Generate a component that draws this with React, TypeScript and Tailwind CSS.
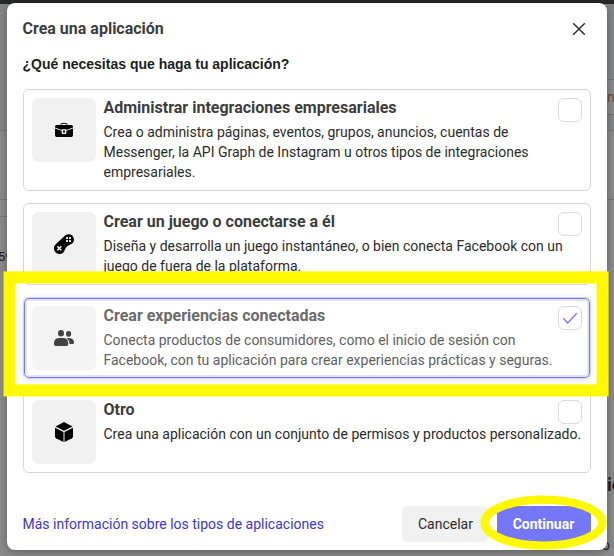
import type { ReactNode } from "react";

type CardProps = {
  title: string;
  lines: string[];
  icon: ReactNode;
  selected?: boolean;
};

function Briefcase() {
  return (
    <svg width="20" height="20" viewBox="0 0 20 20">
      <path d="M7 5.2V4.3Q7 3.4 8.2 3.4H11.8Q13 3.4 13 4.3V5.2" fill="none" stroke="#050505" />
      <path d="M2.6 4.9H17.4Q19 4.9 19 6.5V7.6L12.4 9.9V9.2H7.6V9.9L1 7.6V6.5Q1 4.9 2.6 4.9Z" fill="#050505" />
      <path d="M1 8.4L7.6 10.8V12.4Q7.6 14 9 14H11Q12.4 14 12.4 12.4V10.8L19 8.4V15.2Q19 17 17.3 17H2.7Q1 17 1 15.2Z" fill="#050505" />
      <path d="M8 10H12V14H8Z" fill="#f1f1f1" />
      <path d="M9.1 10.6H10.9V12.8H9.1Z" fill="#050505" />
    </svg>
  );
}

function Gamepad() {
  return (
    <svg width="20" height="20" viewBox="0 0 20 20">
      <path d="M11 1.5C13.5-.4 17-.2 18.8 2.2C20.8 5 20.2 8.5 17.3 10C14.6 11.3 12.2 12.2 11 15.5C10 19.7 5.6 21.2 2.4 19C-.7 16.8-.8 12.7 1.5 10.4Z" fill="#050505" />
      <path d="M12 3H14V5H12ZM15 3H17V5H15ZM12 6H14V8H12ZM15 6H17V8H15Z" fill="#ddd" />
      <path d="M3.3 12.3L7.3 16.3M7.3 12.3L3.3 16.3" stroke="#eee" strokeWidth="1.6" />
    </svg>
  );
}

function People() {
  return (
    <svg width="20" height="20" viewBox="0 0 20 20" fill="#050505">
      <ellipse cx="7" cy="5.2" rx="3" ry="3.3" />
      <ellipse cx="14.6" cy="5.8" rx="2.6" ry="2.9" />
      <path d="M0 16V15Q.3 10 5.2 10H9Q14 10 14.2 15V16Q14.2 18 12.7 18H1.5Q0 18 0 16Z" />
      <path d="M12.7 9.9H15Q20 10.2 20 14.4Q20 16 18.6 16H15.5Q15.4 12 12.7 9.9Z" />
    </svg>
  );
}

function Cube() {
  return (
    <svg width="20" height="20" viewBox="0 0 20 20" fill="#050505">
      <path d="M10 0L18.5 4.6L10 8.7L1.5 4.6Z" />
      <path d="M1 5.8L9.5 10V20L2 16.2Q1 15.6 1 14.5Z" />
      <path d="M19 5.8L10.5 10V20L18 16.2Q19 15.6 19 14.5Z" />
    </svg>
  );
}

function Card({ title, lines, icon, selected }: CardProps) {
  return (
    <div
      className={
        selected
          ? "flex gap-[7.5px] rounded-md border border-[#d3d5ea] p-2 shadow-[inset_0_0_0_1px_#7478f4,inset_0_0_0_3px_#e3e4fb,0_1px_6px_#0000001c]"
          : "flex gap-[7.5px] rounded-md border border-[#d6d6d6] p-2"
      }
    >
      <div
        className={
          selected
            ? "flex size-16 shrink-0 items-center justify-center rounded-md bg-[#f1f1f1] opacity-75"
            : "flex size-16 shrink-0 items-center justify-center rounded-md bg-[#f1f1f1]"
        }
      >
        {icon}
      </div>
      <div className="min-w-0 flex-1">
        <div className="flex h-6 justify-between">
          <h2
            className={
              selected
                ? "text-base leading-[19px] font-bold text-[#6b6b6b]"
                : "text-base leading-[19px] font-bold text-[#3d3d3d]"
            }
          >
            {title}
          </h2>
          <span className="flex size-6 items-center justify-center rounded-md border border-[#d9d9d9] bg-white">
            {selected && (
              <svg width="16" height="16" viewBox="0 0 16 16">
                <path d="M1.3 8.2L5.7 12.9L14.7 3.3" fill="none" stroke="#7478f4" strokeWidth="1.4" />
              </svg>
            )}
          </span>
        </div>
        <p
          className={
            selected
              ? "text-sm leading-5 whitespace-nowrap text-[#616161]"
              : "text-sm leading-5 whitespace-nowrap text-[#2b2b2b]"
          }
        >
          {lines.map((line) => (
            <span key={line} className="block">
              {line}
            </span>
          ))}
        </p>
      </div>
    </div>
  );
}

export default function App() {
  return (
    <div className="relative h-[556px] w-[614px] overflow-hidden bg-[#8b8b8b] px-[7px] pt-[3px] font-[Roboto,sans-serif]">
      <div className="absolute inset-x-0 top-0 h-1 bg-[#282828]" />
      <div className="absolute inset-x-0 top-1 h-[126px] bg-[#848586]" />
      <div className="absolute inset-x-0 top-[130px] h-px bg-[#777]" />
      <div className="absolute inset-x-0 top-[199px] h-px bg-[#777]" />
      <div className="absolute top-[216px] left-0 h-px w-2 bg-[#777]" />
      <span className="absolute top-[248px] -left-[2px] text-[13px] leading-[18px] text-[#222]">59</span>
      <div className="absolute top-[79px] right-0 h-9 w-2 border-y border-[#727272] bg-[#8c8c8c]" />
      <span className="absolute top-[87px] left-[607px] text-sm text-[#634c3c]">n</span>
      <span className="absolute top-[471px] left-[607px] text-lg font-bold text-[#1f2023]">ic</span>
      <span className="absolute top-[535px] left-[602px] text-sm text-[#292929]">o c</span>

      <main className="relative flex h-[547px] flex-col rounded-lg bg-white px-4 shadow-[0_2px_10px_#00000050]">
        <header className="flex h-[51px] items-center justify-between">
          <h1 className="-ml-[0.5px] text-base font-bold text-[#3d3d3d]">Crea una aplicación</h1>
          <svg className="mr-[5px]" width="14" height="14" viewBox="0 0 14 14">
            <path d="M1.2 1.2L12.8 12.8M12.8 1.2L1.2 12.8" stroke="#303030" strokeWidth="1.5" />
          </svg>
        </header>
        <p className="mb-[14px] -ml-[0.5px] h-[21px] font-['Liberation_Sans',sans-serif] text-sm leading-[21px] font-bold text-[#1c1e21]">
          ¿Qué necesitas que haga tu aplicación?
        </p>
        <div className="flex flex-col gap-3">
          <Card
            title="Administrar integraciones empresariales"
            icon={<Briefcase />}
            lines={[
              "Crea o administra páginas, eventos, grupos, anuncios, cuentas de",
              "Messenger, la API Graph de Instagram u otros tipos de integraciones",
              "empresariales.",
            ]}
          />
          <Card
            title="Crear un juego o conectarse a él"
            icon={<Gamepad />}
            lines={[
              "Diseña y desarrolla un juego instantáneo, o bien conecta Facebook con un",
              "juego de fuera de la plataforma.",
            ]}
          />
          <Card
            selected
            title="Crear experiencias conectadas"
            icon={<People />}
            lines={[
              "Conecta productos de consumidores, como el inicio de sesión con",
              "Facebook, con tu aplicación para crear experiencias prácticas y seguras.",
            ]}
          />
          <Card
            title="Otro"
            icon={<Cube />}
            lines={["Crea una aplicación con un conjunto de permisos y productos personalizado."]}
          />
        </div>
        <footer className="mt-[33px] flex h-9 items-center gap-2 text-sm">
          <a className="mr-auto -ml-[0.5px] text-[#3c36d6]">Más información sobre los tipos de aplicaciones</a>
          <button className="h-9 w-[87px] rounded-md bg-[#f1f1f1] text-[#2b2b2b]">Cancelar</button>
          <button className="h-9 w-[94px] rounded-md bg-[#7478f8] pr-px font-bold text-white">Continuar</button>
        </footer>
      </main>

      <svg className="absolute inset-0" width="614" height="556" viewBox="0 0 614 556" fill="none" stroke="#fff900">
        <rect x="9.5" y="277.4" width="593.1" height="113" strokeWidth="12" />
        <ellipse cx="543.5" cy="522.6" rx="58.8" ry="23" strokeWidth="8.4" />
      </svg>
    </div>
  );
}
